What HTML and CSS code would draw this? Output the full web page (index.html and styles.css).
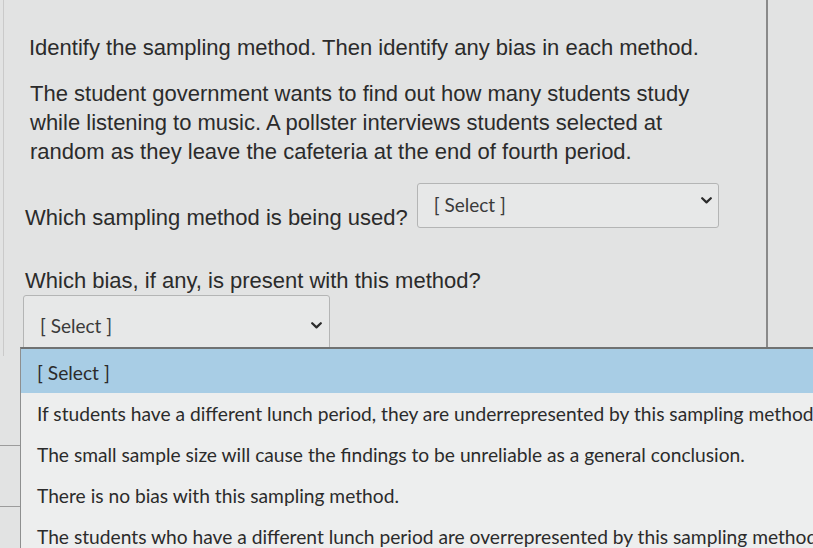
FILE: index.html
```html
<!DOCTYPE html>
<html lang="en">
<head>
    <meta charset="UTF-8">
    <meta name="viewport" content="width=device-width, initial-scale=1.0">
    <title>Sampling Methods Quiz</title>
    <link rel="stylesheet" href="styles.css">
</head>
<body>
    <div class="page">
        <div class="panel">
            <p class="prompt">Identify the sampling method. Then identify any bias in each method.</p>
            <p class="scenario">The student government wants to find out how many students study<br>while listening to music. A pollster interviews students selected at<br>random as they leave the cafeteria at the end of fourth period.</p>
            <div class="question-row">
                <span class="question">Which sampling method is being used?</span>
                <div class="select select-method">
                    <span>[ Select ]</span>
                    <svg class="chevron" width="11" height="7" viewBox="0 0 11 7"><polyline points="1.2,1.2 5.5,5.4 9.8,1.2" fill="none" stroke="#2b2b2b" stroke-width="2.2" stroke-linecap="round" stroke-linejoin="round"/></svg>
                </div>
            </div>
            <p class="question question-bias">Which bias, if any, is present with this method?</p>
            <div class="select-wrap">
                <div class="select select-bias">
                    <span>[ Select ]</span>
                    <svg class="chevron" width="11" height="7" viewBox="0 0 11 7"><polyline points="1.2,1.2 5.5,5.4 9.8,1.2" fill="none" stroke="#2b2b2b" stroke-width="2.2" stroke-linecap="round" stroke-linejoin="round"/></svg>
                </div>
                <ul class="options">
                    <li class="option active">[ Select ]</li>
                    <li class="option">If students have a different lunch period, they are underrepresented by this sampling method.</li>
                    <li class="option">The small sample size will cause the findings to be unreliable as a general conclusion.</li>
                    <li class="option">There is no bias with this sampling method.</li>
                    <li class="option">The students who have a different lunch period are overrepresented by this sampling method.</li>
                </ul>
            </div>
        </div>
        <div class="row-lines">
            <div class="row-line first"></div>
            <div class="row-line"></div>
        </div>
    </div>
</body>
</html>
```

FILE: styles.css
```css
body {
    margin: 0;
    background-color: #e2e3e3;
    font-family: "Liberation Sans", Arial, sans-serif;
    color: #2b2b2b;
    overflow: hidden;
    height: 100vh;
}
.page {
    width: 813px;
}
.panel {
    margin-left: 3px;
    width: 741px;
    padding-left: 21px;
    border-left: 1px solid #cacaca;
    border-right: 2px solid #8a8a8a;
}
.prompt {
    margin: 0;
    padding-top: 33px;
    padding-left: 4px;
    font-size: 22px;
    line-height: 29px;
}
.scenario {
    margin: 17px 0 0 0;
    padding-left: 5px;
    font-size: 22px;
    line-height: 29px;
}
.question-row {
    display: flex;
    align-items: flex-end;
    gap: 9px;
    margin-top: 17px;
}
.question {
    font-size: 22px;
    line-height: 29px;
}
.select {
    display: flex;
    align-items: center;
    justify-content: space-between;
    box-sizing: border-box;
    background-color: #e7e8e8;
    border: 1px solid #b4b5b5;
    border-radius: 3px;
    font-family: Lato, "Liberation Sans", sans-serif;
    font-size: 19px;
    line-height: 23px;
    color: #3a3a3a;
}
.select-method {
    width: 302px;
    height: 45px;
    margin-bottom: 4px;
    padding: 0 6px 2px 16px;
}
.select-method .chevron {
    margin-top: -8px;
}
.question-bias {
    display: block;
    margin: 36px 0 0 0;
    line-height: 26px;
}
.select-wrap {
    position: relative;
    margin-top: 1px;
    margin-left: -2px;
}
.select-bias {
    width: 307px;
    padding: 18px 7px 18px 16px;
}
.options {
    position: absolute;
    top: 52px;
    left: -3px;
    width: 830px;
    margin: 0;
    padding: 0;
    list-style: none;
    background-color: #edeeee;
    border-top: 2px solid #707272;
    border-left: 1px solid #8e8f8f;
    font-family: Lato, "Liberation Sans", sans-serif;
    font-size: 19.2px;
    line-height: 23px;
    color: #2b2b2b;
    white-space: nowrap;
}
.option {
    padding: 9px 16px;
}
.option.active {
    background-color: #a8cde5;
    padding: 12px 16px 9px 16px;
}
.row-lines {
    width: 20px;
}
.row-line {
    height: 60px;
    border-bottom: 1px solid #9c9c9c;
}
.row-line.first {
    height: 89px;
}
```
